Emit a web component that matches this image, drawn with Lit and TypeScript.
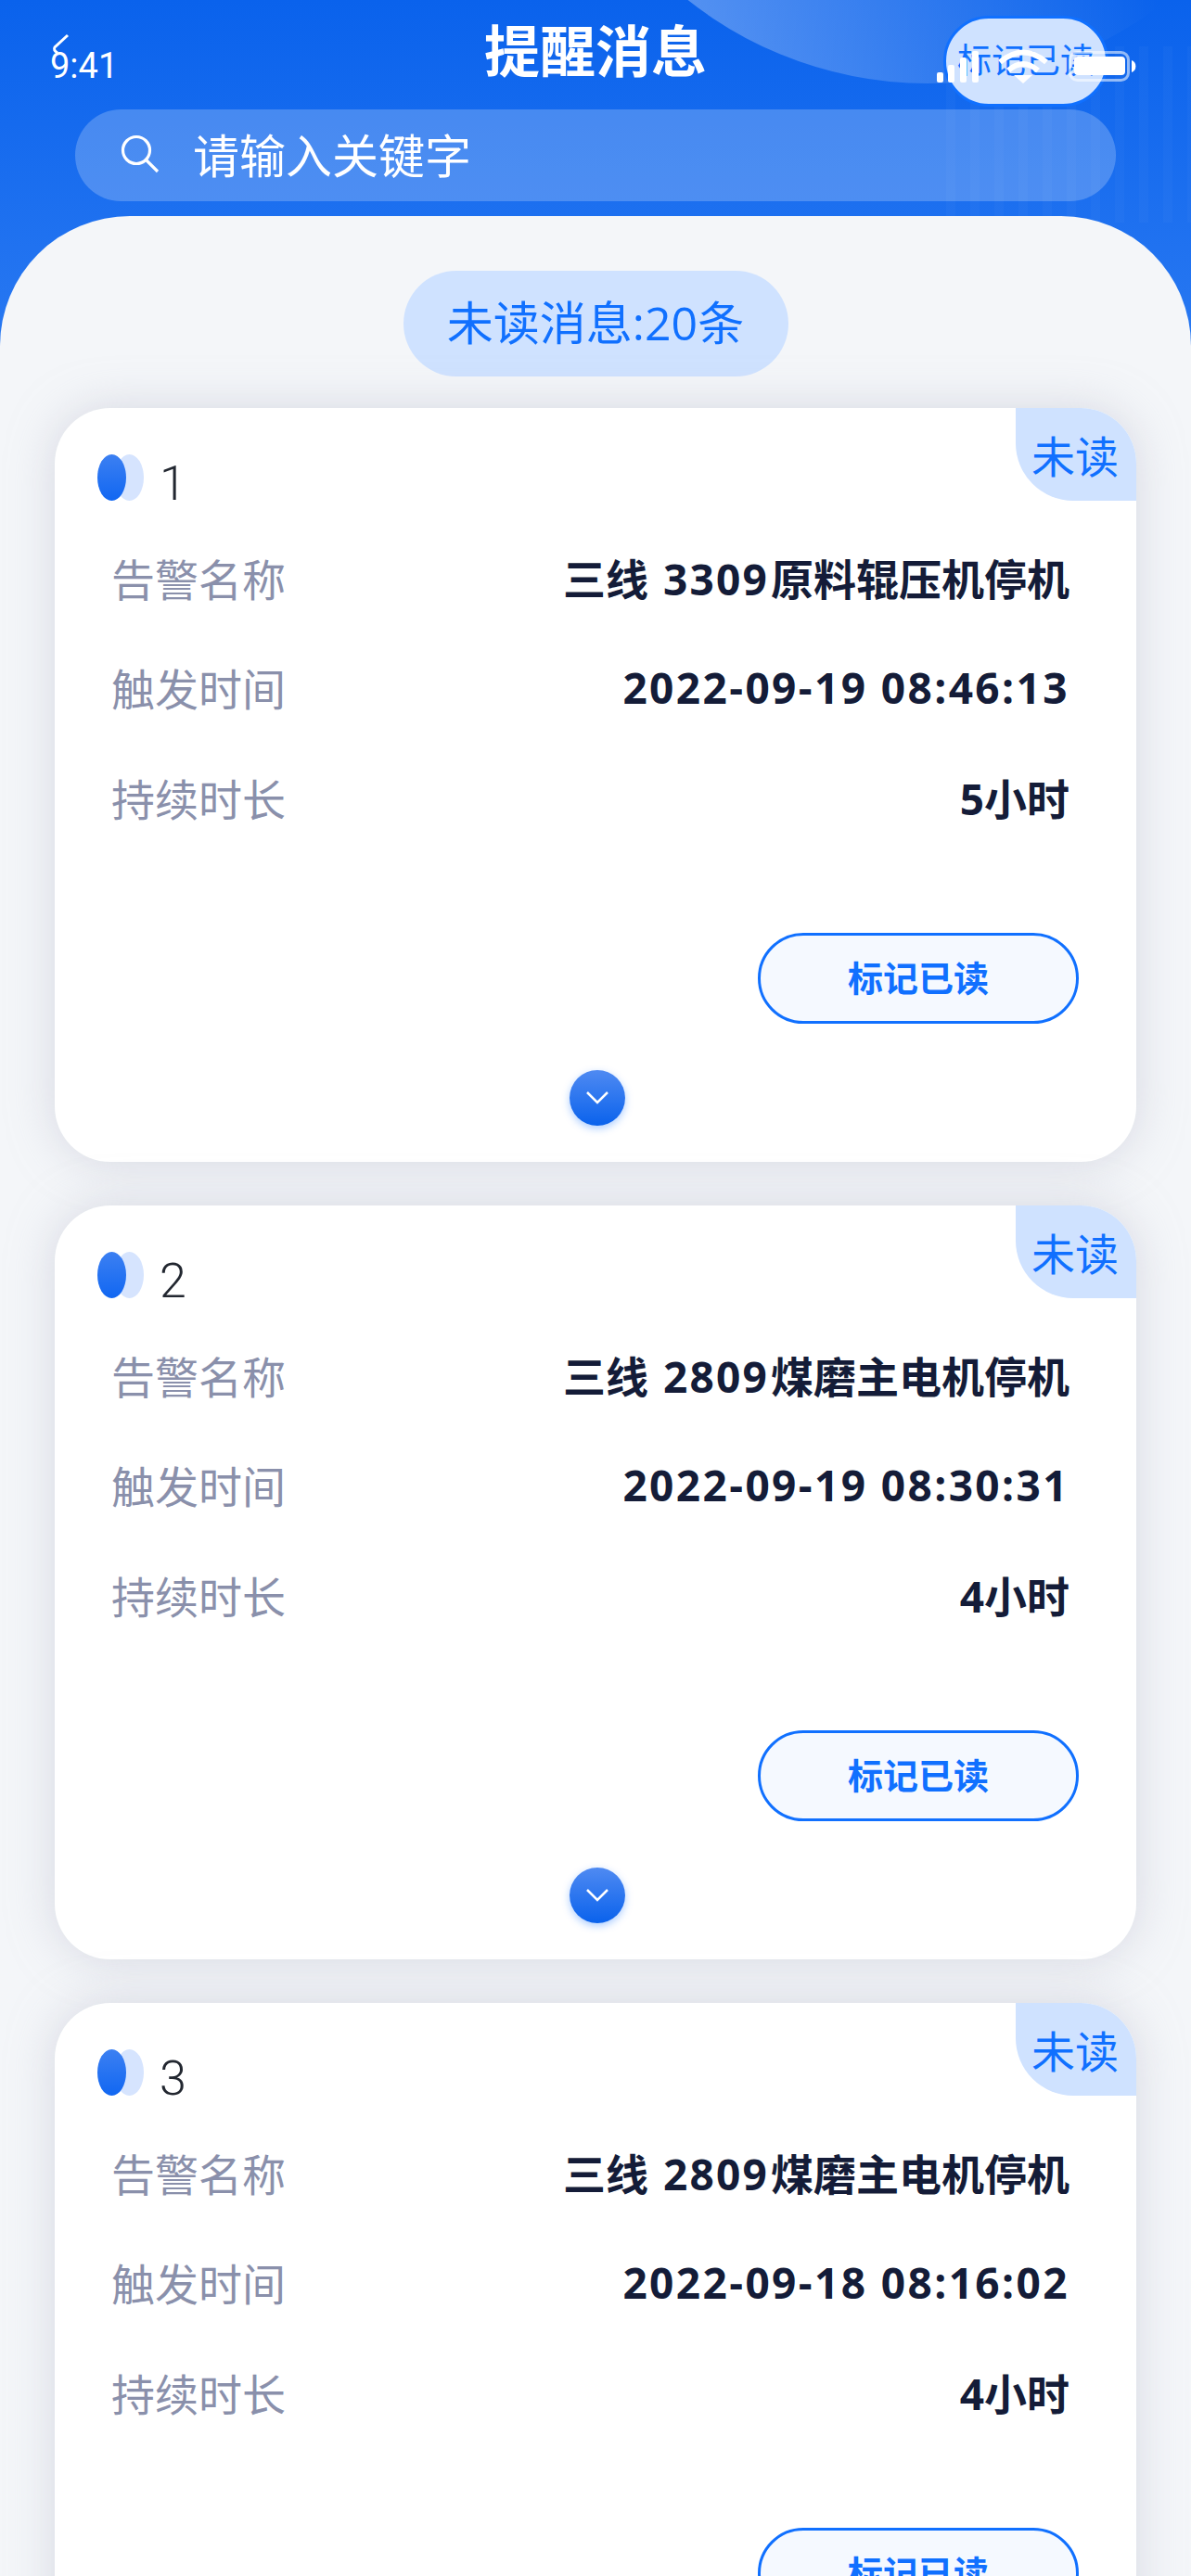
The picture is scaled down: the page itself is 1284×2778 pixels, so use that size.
import { LitElement, html, css, svg } from "lit";
import { customElement } from "lit/decorators.js";

const items = [
  { n: 1, pre: "三线", code: "3309", post: "原料辊压机停机", time: "2022-09-19 08:46:13", dur: "5小时" },
  { n: 2, pre: "三线", code: "2809", post: "煤磨主电机停机", time: "2022-09-19 08:30:31", dur: "4小时" },
  { n: 3, pre: "三线", code: "2809", post: "煤磨主电机停机", time: "2022-09-18 08:16:02", dur: "4小时" },
];

@customElement("app-root")
export class AppRoot extends LitElement {
  static styles = css`
    :host {
      display: block;
      width: 1284px;
      height: 2778px;
      overflow: hidden;
      position: relative;
      font-family: "Open Sans", "Noto Sans CJK SC", sans-serif;
      background: #f4f6f9;
    }
    .header {
      position: relative;
      height: 400px;
      background: linear-gradient(180deg, #0a62ec 0%, #2b7af2 400px);
      overflow: hidden;
    }
    .blob {
      position: absolute;
      left: 584px;
      top: -742px;
      width: 832px;
      height: 832px;
      border-radius: 50%;
      background: linear-gradient(90deg, rgba(255, 255, 255, 0.3) 18%, rgba(255, 255, 255, 0) 80%);
    }
    .stripes {
      position: absolute;
      left: 1020px;
      top: 50px;
      width: 264px;
      height: 190px;
      background: repeating-linear-gradient(90deg, rgba(255, 255, 255, 0.025) 0 10px, rgba(255, 255, 255, 0) 10px 26px);
    }
    .bar {
      position: relative;
      display: grid;
      grid-template-columns: 1fr auto 1fr;
      align-items: start;
      height: 118px;
      padding: 0 89px;
      box-sizing: border-box;
    }
    .title {
      grid-column: 2;
      margin: 23px 0 0 0;
      font-size: 60px;
      line-height: 64px;
      font-weight: 700;
      color: #fff;
    }
    .mark {
      grid-column: 3;
      justify-self: end;
      margin-top: 17px;
      width: 178px;
      height: 98px;
      box-sizing: border-box;
      border: 3px solid #1070ff;
      border-radius: 49px;
      background: #cfe2ff;
      color: #1070ff;
      font-size: 37px;
      line-height: 90px;
      text-align: center;
      white-space: nowrap;
      overflow: hidden;
    }
    .search {
      position: relative;
      display: flex;
      align-items: center;
      gap: 35px;
      margin: 0 81px;
      height: 99px;
      padding: 0 0 4px 48px;
      box-sizing: border-box;
      border-radius: 50px;
      background: rgba(255, 255, 255, 0.22);
      color: #fff;
      font-size: 50px;
    }
    .search svg { width: 44px; height: 44px; flex: none; }
    .sheet {
      position: absolute;
      top: 233px;
      left: 0;
      width: 1284px;
      box-sizing: border-box;
      padding-top: 59px;
      background: #f4f6f9;
      border-radius: 140px 140px 0 0;
      display: flex;
      flex-direction: column;
      align-items: center;
    }
    .pill {
      width: 415px;
      height: 114px;
      border-radius: 57px;
      background: #cfe2ff;
      color: #1070ff;
      font-size: 50px;
      line-height: 112px;
      text-align: center;
      white-space: nowrap;
      margin-bottom: 34px;
    }
    .cards {
      display: flex;
      flex-direction: column;
      gap: 47px;
      width: 1166px;
    }
    .card {
      position: relative;
      height: 813px;
      flex: none;
      background: #fff;
      border-radius: 60px;
      box-shadow: 0 0 48px rgba(185, 187, 203, 0.5);
      overflow: hidden;
      display: flex;
      flex-direction: column;
    }
    .badge {
      position: absolute;
      top: 0;
      right: 0;
      width: 130px;
      height: 100px;
      border-bottom-left-radius: 62px;
      background: #cfe2ff;
      color: #1070ff;
      font-size: 47px;
      line-height: 104px;
      text-align: right;
      padding-right: 19px;
      box-sizing: border-box;
    }
    .head {
      display: flex;
      align-items: flex-start;
      gap: 17px;
      margin: 50px 0 23px 46px;
      height: 50px;
    }
    .dot { display: flex; width: 50px; height: 50px; flex: none; }
    .dot i { display: block; width: 31px; height: 50px; border-radius: 50%; }
    .dot .a { position: relative; background: linear-gradient(180deg, #3c80f2, #1167f2); }
    .dot .b { margin-left: -12px; background: #d6e4fe; }
    .num {
      font-family: Roboto, sans-serif;
      font-size: 52px;
      line-height: 64px;
      color: #222730;
      font-weight: 300;
    }
    .rows { display: flex; flex-direction: column; padding: 0 72px 0 61px; }
    .row {
      display: flex;
      justify-content: space-between;
      align-items: center;
      height: 118.5px;
    }
    .row .k { color: #8a90ab; font-size: 47px; }
    .row .v { color: #141c38; font-weight: 700; white-space: nowrap; font-size: 46px; }
    .row .lat { letter-spacing: 2.4px; }
    .row .code { letter-spacing: 2.2px; margin: 0 2px 0 4px; }
    .actions { display: flex; justify-content: flex-end; padding-right: 62px; margin-top: 87px; }
    .btn {
      width: 346px;
      height: 98px;
      box-sizing: border-box;
      border: 3px solid #1070ff;
      border-radius: 49px;
      background: #f5f9ff;
      color: #1070ff;
      font-size: 38px;
      font-weight: 700;
      line-height: 90px;
      text-align: center;
    }
    .more { display: flex; justify-content: center; margin: 50px 0 0 3px; }
    .chev {
      display: flex;
      align-items: center;
      justify-content: center;
      width: 60px;
      height: 60px;
      border-radius: 50%;
      background: linear-gradient(180deg, #4f8af2, #0a62ec);
      box-shadow: 0 3px 8px rgba(16, 112, 255, 0.35);
    }
    .chev svg { width: 30px; height: 20px; }
    .status {
      position: absolute;
      top: 0;
      left: 0;
      width: 1284px;
      height: 100px;
      pointer-events: none;
    }
    .time {
      position: absolute;
      left: 54px;
      top: 50px;
      font-family: Roboto, sans-serif;
      font-size: 38px;
      line-height: 42px;
      color: #fff;
    }
    .status svg { position: absolute; left: 0; top: 0; }
  `;

  private statusIcons() {
    return svg`
      <path d="M73 38 L59 51 Q57 54 62 57" fill="none" stroke="#fff" stroke-width="3"/>
      <rect x="1010" y="78" width="7" height="11" rx="2" fill="#fff"/>
      <rect x="1022" y="70" width="7" height="19" rx="2" fill="#fff"/>
      <rect x="1035" y="62" width="7" height="27" rx="2" fill="#fff"/>
      <rect x="1048" y="55" width="7" height="34" rx="2" fill="#fff"/>
      <path d="M1078 67 Q1103 46 1128 67" fill="none" stroke="#fff" stroke-width="6"/>
      <path d="M1087 76 Q1103 62 1119 76" fill="none" stroke="#fff" stroke-width="6"/>
      <path d="M1093 81 L1113 81 L1103 90 Z" fill="#fff"/>
      <rect x="1153.5" y="56.5" width="63" height="30" rx="8" fill="none" stroke="#fff" stroke-opacity=".55" stroke-width="3"/>
      <rect x="1158" y="61" width="55" height="20" rx="4" fill="#fff"/>
      <path d="M1220 65 A7 7 0 0 1 1220 78 Z" fill="#fff"/>
    `;
  }

  render() {
    return html`
      <div class="header">
        <div class="blob"></div>
        <div class="stripes"></div>
        <div class="bar">
          <h1 class="title">提醒消息</h1>
          <div class="mark">标记已读</div>
        </div>
        <div class="search">
          <svg viewBox="0 0 44 44" fill="none" stroke="#fff" stroke-width="3.2">
            <circle cx="18" cy="18" r="14.5"/>
            <path d="M28.5 28.5 L41 41"/>
          </svg>
          <span>请输入关键字</span>
        </div>
      </div>
      <div class="sheet">
        <div class="pill">未读消息:20条</div>
        <div class="cards">
          ${items.map(
            (it) => html`
              <div class="card">
                <div class="badge">未读</div>
                <div class="head">
                  <span class="dot"><i class="a"></i><i class="b"></i></span>
                  <span class="num">${it.n}</span>
                </div>
                <div class="rows">
                  <div class="row">
                    <span class="k">告警名称</span>
                    <span class="v">${it.pre} <span class="code">${it.code}</span>${it.post}</span>
                  </div>
                  <div class="row"><span class="k">触发时间</span><span class="v lat">${it.time}</span></div>
                  <div class="row"><span class="k">持续时长</span><span class="v">${it.dur}</span></div>
                </div>
                <div class="actions"><div class="btn">标记已读</div></div>
                <div class="more">
                  <span class="chev">
                    <svg viewBox="0 0 30 20" fill="none" stroke="#fff" stroke-width="2.5"><path d="M4 4 L15 15 L26 4"/></svg>
                  </span>
                </div>
              </div>
            `
          )}
        </div>
      </div>
      <div class="status">
        <span class="time">9:41</span>
        <svg width="1284" height="100" viewBox="0 0 1284 100">${this.statusIcons()}</svg>
      </div>
    `;
  }
}
